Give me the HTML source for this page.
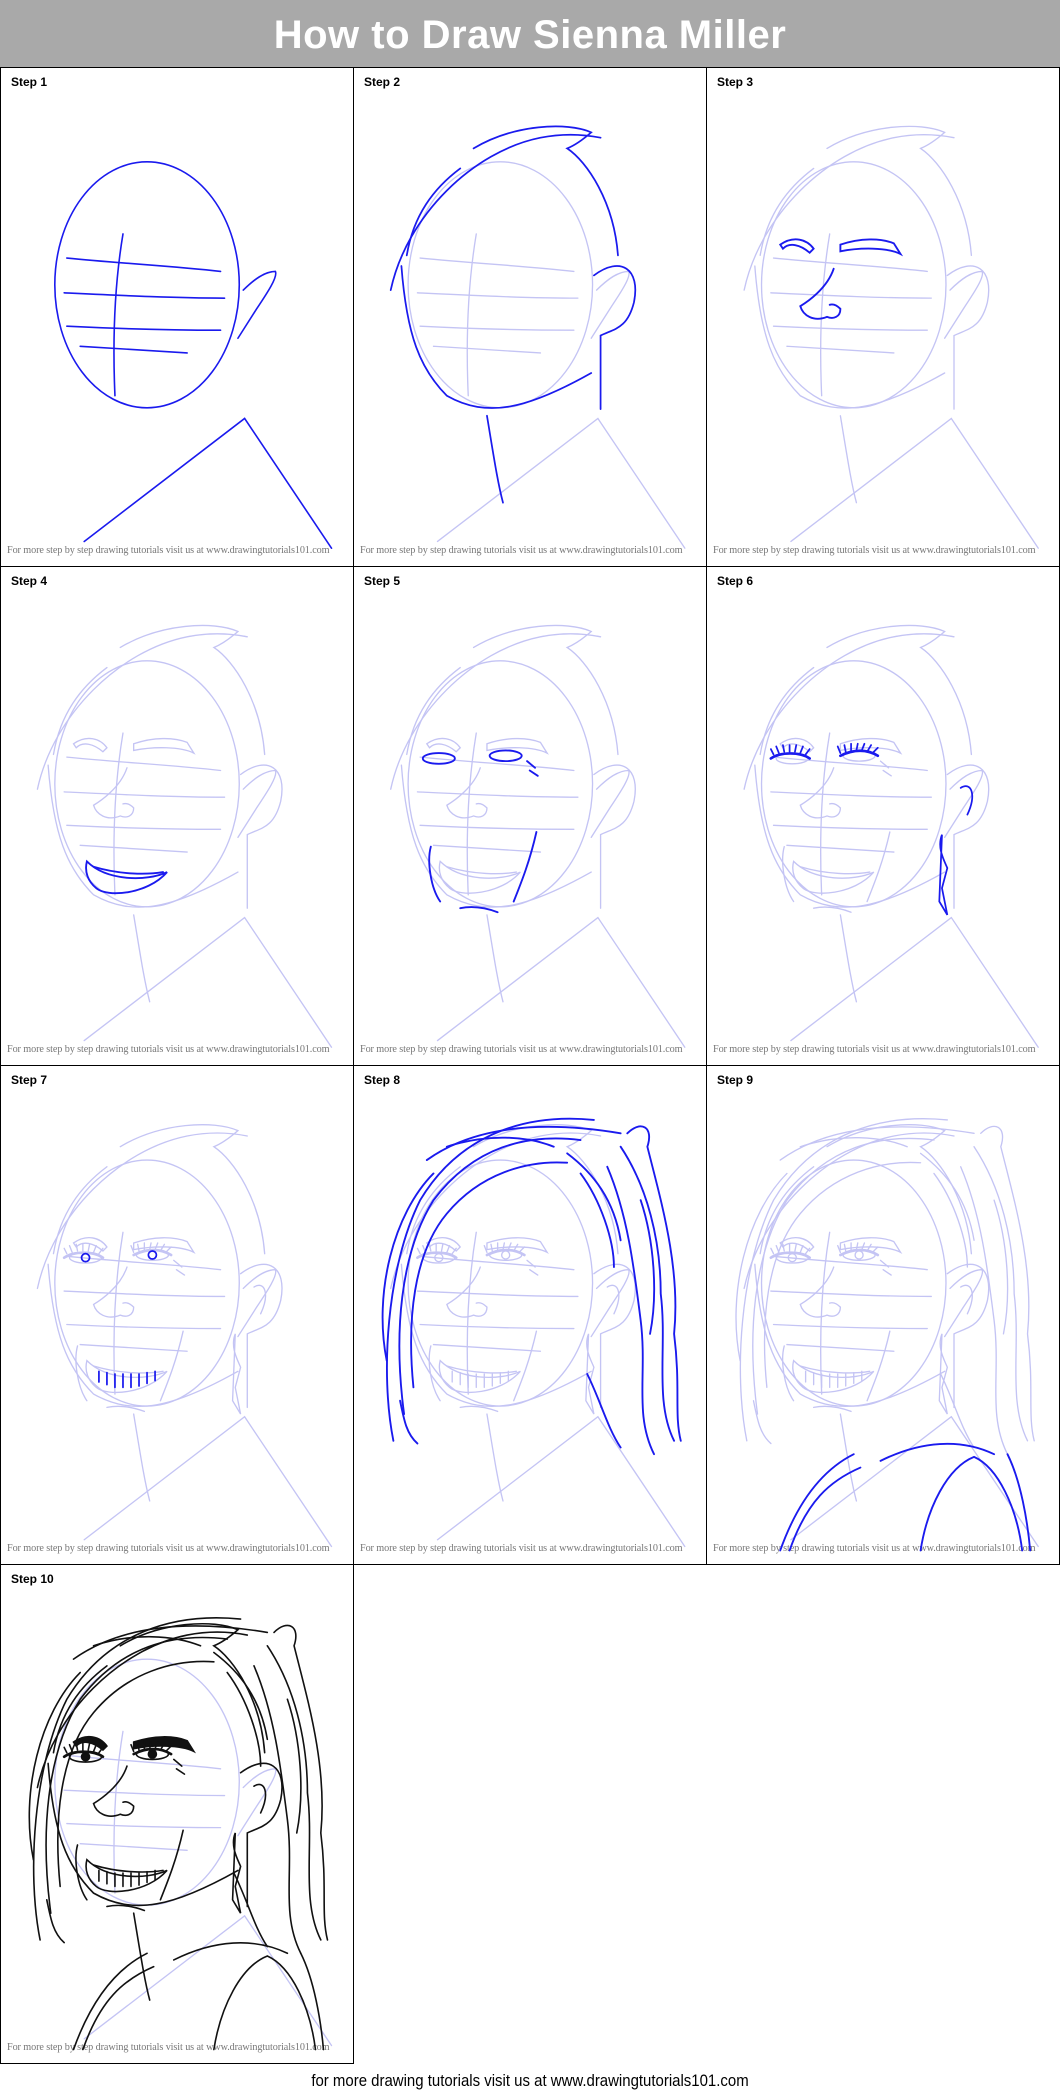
<!DOCTYPE html>
<html><head><meta charset="utf-8"><style>
*{margin:0;padding:0;box-sizing:border-box}
body{width:1060px;height:2095px;background:#fff;position:relative;overflow:hidden;font-family:"Liberation Sans",sans-serif}
.hdr{position:absolute;left:0;top:0;width:1060px;height:68px;background:#a9a9a9;color:#fff;font-weight:bold;font-size:40px;text-align:center;line-height:70px;letter-spacing:0.5px}
.p{position:absolute;width:354px;height:500px;border:1.5px solid #000}
.lab{position:absolute;left:10px;top:7px;font-size:12px;font-weight:bold;color:#000}
.ft{position:absolute;left:6px;top:477px;font-family:"Liberation Serif",serif;font-size:10.2px;color:#777;white-space:nowrap;letter-spacing:-0.1px}
.foot{position:absolute;left:0;top:2071px;width:1060px;text-align:center;font-size:17px;color:#000;transform:scaleX(0.88)}
svg{position:absolute;left:0;top:0}
</style></head><body>
<div class="hdr">How to Draw Sienna Miller</div>

<div class="p" style="left:0;top:67px"><div class="lab">Step 1</div><div class="ft">For more step by step drawing tutorials visit us at www.drawingtutorials101.com</div></div>
<div class="p" style="left:353px;top:67px"><div class="lab">Step 2</div><div class="ft">For more step by step drawing tutorials visit us at www.drawingtutorials101.com</div></div>
<div class="p" style="left:706px;top:67px;width:354px"><div class="lab">Step 3</div><div class="ft">For more step by step drawing tutorials visit us at www.drawingtutorials101.com</div></div>
<div class="p" style="left:0;top:566px"><div class="lab">Step 4</div><div class="ft">For more step by step drawing tutorials visit us at www.drawingtutorials101.com</div></div>
<div class="p" style="left:353px;top:566px"><div class="lab">Step 5</div><div class="ft">For more step by step drawing tutorials visit us at www.drawingtutorials101.com</div></div>
<div class="p" style="left:706px;top:566px"><div class="lab">Step 6</div><div class="ft">For more step by step drawing tutorials visit us at www.drawingtutorials101.com</div></div>
<div class="p" style="left:0;top:1065px"><div class="lab">Step 7</div><div class="ft">For more step by step drawing tutorials visit us at www.drawingtutorials101.com</div></div>
<div class="p" style="left:353px;top:1065px"><div class="lab">Step 8</div><div class="ft">For more step by step drawing tutorials visit us at www.drawingtutorials101.com</div></div>
<div class="p" style="left:706px;top:1065px"><div class="lab">Step 9</div><div class="ft">For more step by step drawing tutorials visit us at www.drawingtutorials101.com</div></div>
<div class="p" style="left:0;top:1564px"><div class="lab">Step 10</div><div class="ft">For more step by step drawing tutorials visit us at www.drawingtutorials101.com</div></div>

<div class="foot">for more drawing tutorials visit us at www.drawingtutorials101.com</div>

<svg width="1060" height="2095" viewBox="0 0 793 1567" preserveAspectRatio="none" fill="none" stroke-linecap="round">
<defs>
<g id="s1">
<ellipse cx="110" cy="162" rx="69" ry="92"/>
<path d="M92 124 C86 160 84 200 86 245"/>
<path d="M50 142 C90 146 130 148 165 152"/>
<path d="M48 168 C90 170 130 172 168 172"/>
<path d="M50 193 C90 195 130 196 165 196"/>
<path d="M60 208 C90 210 120 212 140 213"/>
<path d="M178 202 L192 180 C200 168 208 156 206 152 C198 152 190 158 182 166"/>
<path d="M63 354 L183 262 L248 359"/>
</g>
<g id="s2">
<path d="M28 166 C40 110 90 62 140 52 C160 48 175 50 185 52"/>
<path d="M90 60 C120 42 160 40 178 48 C170 55 165 58 160 60 C175 70 195 100 198 140"/>
<path d="M36 148 C40 200 50 225 70 245 C100 262 130 255 178 228"/>
<path d="M180 155 C200 140 215 150 210 175 C205 195 195 195 185 200 L185 255"/>
<path d="M100 260 C105 290 108 310 112 325"/>
<path d="M40 140 C45 110 60 90 80 75"/>
</g>
<g id="s3b">
<path d="M55 132 C65 125 75 128 80 135 L77 138 C70 132 62 130 57 135 Z"/>
<path d="M100 132 C115 127 130 127 140 131 L145 139 C135 134 115 134 100 137 Z"/>
</g>
<g id="s3n">
<path d="M95 150 C90 165 75 175 70 178 C72 185 80 190 90 186 C95 188 100 186 100 180 C98 178 95 176 92 177"/>
</g>
<g id="s4">
<path d="M65 220 C80 235 110 235 125 228 C110 245 80 247 72 240 C66 235 63 228 65 220 Z"/>
<path d="M70 224 C90 230 110 230 122 228"/>
</g>
<g id="s5">
<ellipse cx="64" cy="143" rx="12" ry="4"/>
<ellipse cx="114" cy="141" rx="12" ry="4"/>
<path d="M58 209 C55 220 58 240 65 250"/>
<path d="M137 198 C132 220 126 235 120 250"/>
<path d="M80 255 C90 253 100 255 108 258"/>
<path d="M130 145 L136 150 M132 152 L138 156"/>
</g>
<g id="s6">
<path d="M50 140 L48 136 M54 139 L52 134 M58 138 L57 133 M62 138 L62 133 M66 138 L67 133 M70 139 L72 134 M74 140 L77 136"/>
<path d="M100 139 L98 134 M104 138 L103 133 M108 137 L108 132 M112 137 L113 132 M116 137 L118 132 M120 138 L123 133 M124 139 L128 135"/>
<path d="M48 143 C55 138 70 138 77 143 M100 141 C110 136 120 136 128 141" stroke-width="2"/>
<path d="M176 200 C172 210 178 220 180 225 L176 240 L180 260 L174 250 Z"/>
<path d="M190 165 C198 160 202 170 195 185"/>
</g>
<g id="s7">
<path d="M74 228 L74 236 M80 229 L80 238 M86 230 L86 240 M92 230 L92 240 M98 230 L98 240 M104 230 L104 239 M110 229 L110 237 M116 228 L116 235"/>
<circle cx="64" cy="143" r="3"/><circle cx="114" cy="141" r="3"/>
</g>
<g id="s8">
<path d="M30 280 C20 230 25 150 50 100 C80 50 130 35 180 40"/>
<path d="M38 260 C30 200 35 140 60 100 C90 60 130 50 170 55"/>
<path d="M45 240 C40 190 45 140 70 110 C95 80 130 70 160 72"/>
<path d="M25 220 C15 170 30 110 60 80"/>
<path d="M55 70 C90 45 140 40 200 50"/>
<path d="M200 60 C220 90 230 130 230 170 C235 210 225 250 240 280"/>
<path d="M190 75 C205 110 210 150 215 190 C220 230 210 260 225 290"/>
<path d="M205 50 C215 40 225 45 220 60 C230 100 245 150 240 200 C245 240 240 260 245 280"/>
<path d="M170 80 C185 100 195 130 195 150"/>
<path d="M160 65 C180 80 195 100 200 130"/>
<path d="M175 230 C185 250 190 270 200 285"/>
<path d="M35 250 C38 265 40 275 48 282"/>
<path d="M70 60 C100 50 130 52 150 60"/>
<path d="M215 100 C225 130 228 170 222 200"/>
</g>
<g id="s9">
<path d="M55 362 C70 320 90 300 110 290"/>
<path d="M62 362 C75 325 92 310 115 300"/>
<path d="M160 362 C165 330 180 300 200 292 C218 300 232 330 236 362"/>
<path d="M130 295 C160 280 190 278 215 290"/>
<path d="M225 290 C235 310 240 340 242 362"/>
</g>
</defs>

<g transform="translate(0,51)"><use href="#s1" stroke="#1a1aee" stroke-width="1.2"/></g>
<g transform="translate(264.3,51)"><use href="#s1" stroke="#c4c4f4" stroke-width="1"/><use href="#s2" stroke="#1a1aee" stroke-width="1.3"/></g>
<g transform="translate(528.7,51)" stroke="#c4c4f4" stroke-width="1"><use href="#s1"/><use href="#s2"/><g stroke="#1a1aee" stroke-width="1.4"><use href="#s3b"/><use href="#s3n"/></g></g>
<g transform="translate(0,424.3)" stroke="#c4c4f4" stroke-width="1"><use href="#s1"/><use href="#s2"/><use href="#s3b"/><use href="#s3n"/><use href="#s4" stroke="#1a1aee" stroke-width="1.4"/></g>
<g transform="translate(264.3,424.3)" stroke="#c4c4f4" stroke-width="1"><use href="#s1"/><use href="#s2"/><use href="#s3b"/><use href="#s3n"/><use href="#s4"/><use href="#s5" stroke="#1a1aee" stroke-width="1.4"/></g>
<g transform="translate(528.7,424.3)" stroke="#c4c4f4" stroke-width="1"><use href="#s1"/><use href="#s2"/><use href="#s3b"/><use href="#s3n"/><use href="#s4"/><use href="#s5"/><use href="#s6" stroke="#1a1aee" stroke-width="1.3"/></g>
<g transform="translate(0,797.7)" stroke="#c4c4f4" stroke-width="1"><use href="#s1"/><use href="#s2"/><use href="#s3b"/><use href="#s3n"/><use href="#s4"/><use href="#s5"/><use href="#s6"/><use href="#s7" stroke="#1a1aee" stroke-width="1.3"/></g>
<g transform="translate(264.3,797.7)" stroke="#c4c4f4" stroke-width="1"><use href="#s1"/><use href="#s2"/><use href="#s3b"/><use href="#s3n"/><use href="#s4"/><use href="#s5"/><use href="#s6"/><use href="#s7"/><use href="#s8" stroke="#1a1aee" stroke-width="1.4"/></g>
<g transform="translate(528.7,797.7)" stroke="#c4c4f4" stroke-width="1"><use href="#s1"/><use href="#s2"/><use href="#s3b"/><use href="#s3n"/><use href="#s4"/><use href="#s5"/><use href="#s6"/><use href="#s7"/><use href="#s8"/><use href="#s9" stroke="#1a1aee" stroke-width="1.4"/></g>
<g transform="translate(0,1171)" stroke="#111" stroke-width="1.2"><use href="#s1" stroke="#c4c4f4" stroke-width="1"/><use href="#s2"/><use href="#s3b" fill="#111"/><use href="#s3n"/><use href="#s4"/><use href="#s5"/><use href="#s6"/><use href="#s7" fill="#111"/><use href="#s8"/><use href="#s9"/></g>
</svg>
</body></html>
